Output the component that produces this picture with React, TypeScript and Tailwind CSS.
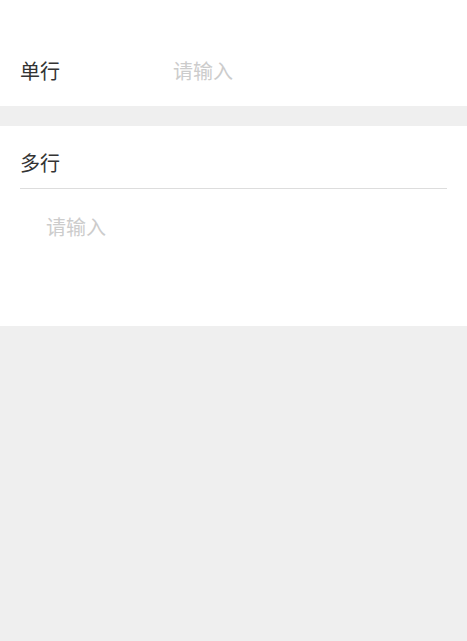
import { useState } from "react";

function App() {
  const [single, setSingle] = useState("");
  const [multi, setMulti] = useState("");

  return (
    <div
      className="min-h-[641px] w-full bg-[#efefef] text-[#333333]"
      style={{ fontFamily: '"Noto Sans CJK SC", "Noto Sans", sans-serif' }}
    >
      {/* 单行 */}
      <div className="bg-white pt-[36px]">
        <div className="flex h-[70px] items-center px-[20px]">
          <span className="w-[153px] shrink-0 text-[20px] leading-[28px]">单行</span>
          <input
            type="text"
            value={single}
            onChange={(e) => setSingle(e.target.value)}
            placeholder="请输入"
            className="min-w-0 flex-1 bg-transparent text-[20px] leading-[28px] outline-none placeholder:text-[#cccccc]"
          />
        </div>
      </div>

      {/* 多行 */}
      <div className="mt-[20px] bg-white">
        <div className="mx-[20px] border-b border-[#dddddd] pt-[20px] pb-[8px]">
          <span className="block text-[20px] leading-[34px]">多行</span>
        </div>
        <textarea
          value={multi}
          onChange={(e) => setMulti(e.target.value)}
          placeholder="请输入"
          className="block h-[137px] w-full resize-none bg-transparent px-[46px] pt-[24px] text-[20px] leading-[28px] outline-none placeholder:text-[#cccccc]"
        />
      </div>
    </div>
  );
}

export default App;
